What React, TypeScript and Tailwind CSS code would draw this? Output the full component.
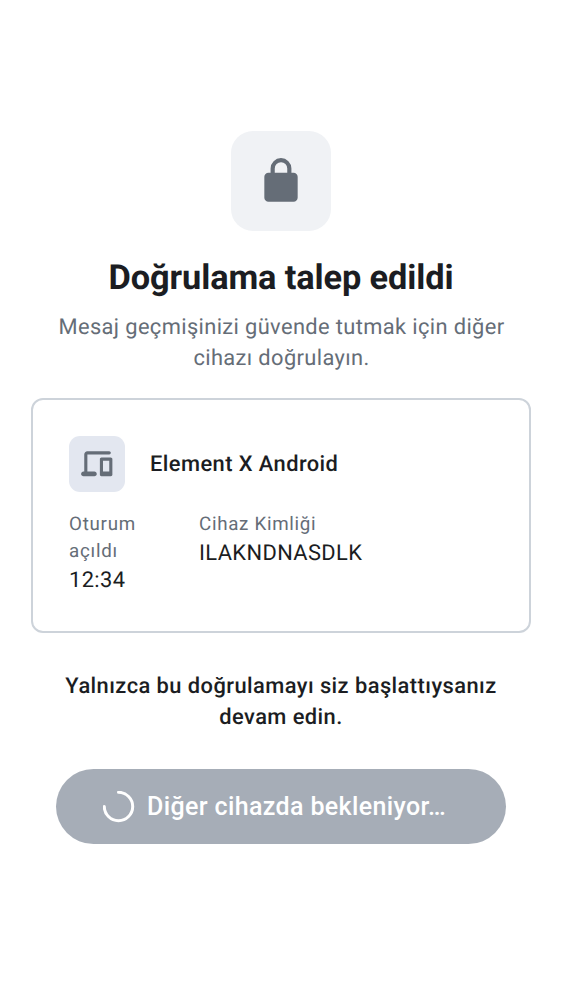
import React from "react";

function LockIcon() {
  return (
    <svg viewBox="0 0 24 24" className="size-[50px]" fill="#656d77">
      <path d="M6 22q-.825 0-1.412-.587A1.93 1.93 0 0 1 4 20V10q0-.825.588-1.412A1.93 1.93 0 0 1 6 8h1V6q0-2.075 1.463-3.537Q9.926 1 12 1t3.537 1.463T17 6v2h1q.824 0 1.413.588Q20 9.175 20 10v10q0 .824-.587 1.413A1.93 1.93 0 0 1 18 22zM9 8h6V6q0-1.25-.875-2.125A2.9 2.9 0 0 0 12 3q-1.25 0-2.125.875A2.9 2.9 0 0 0 9 6z" />
    </svg>
  );
}

function DevicesIcon() {
  return (
    <svg viewBox="0 0 24 24" className="size-[37.5px]" fill="#656d77">
      <path d="M3.5 20q-.625 0-1.062-.437A1.45 1.45 0 0 1 2 18.5q0-.625.438-1.062A1.45 1.45 0 0 1 3.5 17H4V6q0-.824.588-1.412A1.93 1.93 0 0 1 6 4h14q.424 0 .712.287Q21 4.576 21 5t-.288.713A.97.97 0 0 1 20 6H6v11h4.5q.624 0 1.063.438.437.436.437 1.062 0 .624-.437 1.063A1.45 1.45 0 0 1 10.5 20zM15 20a.97.97 0 0 1-.713-.288A.97.97 0 0 1 14 19V9q0-.424.287-.713A.97.97 0 0 1 15 8h6q.424 0 .712.287Q22 8.576 22 9v10q0 .424-.288.712A.97.97 0 0 1 21 20zm1-3h4v-7h-4z" />
    </svg>
  );
}

function Header() {
  return (
    <header className="flex flex-col items-center text-center">
      <div className="flex size-[100px] items-center justify-center rounded-[22px] bg-[#f0f2f5]">
        <LockIcon />
      </div>
      <h1 className="mt-[26px] text-[34.375px] leading-[42px] font-bold tracking-[-0.12px] text-[#1b1d22]">Doğrulama talep edildi</h1>
      <p className="mt-[13px] pl-px text-[21.875px] leading-[31px] tracking-[0.37px] text-[#656d77]">
        Mesaj geçmişinizi güvende tutmak için diğer
        <br />
        cihazı doğrulayın.
      </p>
    </header>
  );
}

function SessionCard() {
  return (
    <section className="mx-[31px] mt-6 h-[235px] rounded-[12px] border-2 border-[#cdd3da] px-9 pt-9">
      <div className="flex items-center gap-[25px]">
        <div className="flex size-14 items-center justify-center rounded-[11px] bg-[#e3e7f0]">
          <DevicesIcon />
        </div>
        <span className="text-[21.875px] leading-[31px] font-medium tracking-[0.43px]">Element X Android</span>
      </div>
      <dl className="mt-[19px] flex gap-[50px]">
        <div className="w-20">
          <dt className="text-[18.75px] leading-[27px] tracking-[0.75px] text-[#656d77]">
            Oturum
            <br />
            açıldı
          </dt>
          <dd className="text-[21.875px] leading-[31px] tracking-[0.39px]">12:34</dd>
        </div>
        <div>
          <dt className="text-[18.75px] leading-[27px] tracking-[0.7px] text-[#656d77]">Cihaz Kimliği</dt>
          <dd className="text-[21.875px] leading-[31px] tracking-[0.39px]">ILAKNDNASDLK</dd>
        </div>
      </dl>
    </section>
  );
}

export default function App() {
  return (
    <main className="h-[1000px] bg-white pt-[131px] font-['Roboto',sans-serif] text-[#1b1d22] [text-rendering:geometricPrecision]">
      <Header />
      <SessionCard />
      <p className="mt-[38px] text-center text-[21.875px] leading-[31px] font-medium tracking-[0.44px]">
        Yalnızca bu doğrulamayı siz başlattıysanız
        <br />
        devam edin.
      </p>
      <button className="mx-[56px] mt-9 flex h-[75px] w-[450px] items-center rounded-full bg-[#a6adb7] pl-[47px] text-white">
        <svg viewBox="0 0 32 32" className="size-8" fill="none" stroke="white" strokeWidth="3" strokeLinecap="round">
          <path d="M15.5 1.3A14.2 14.2 0 1 1 1.3 15.5" />
        </svg>
        <span className="ml-3 text-[25px] leading-[37px] font-medium tracking-[0.37px]">Diğer cihazda bekleniyor…</span>
      </button>
    </main>
  );
}
